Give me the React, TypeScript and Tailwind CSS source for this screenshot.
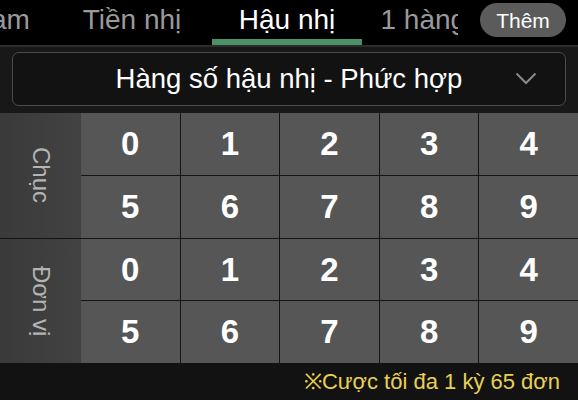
import React, { useState } from "react";

const tabs = ["Hậu tam", "Tiền nhị", "Hậu nhị", "1 hàng số"];
const digits = [0, 1, 2, 3, 4, 5, 6, 7, 8, 9];
const groups = ["Chục", "Đơn vị"];

export default function App() {
  const [active, setActive] = useState(2);
  const [picked, setPicked] = useState<Record<string, number[]>>({});

  const toggle = (group: string, d: number) => {
    const cur = picked[group] || [];
    setPicked({
      ...picked,
      [group]: cur.includes(d) ? cur.filter((x) => x !== d) : [...cur, d],
    });
  };

  return (
    <div className="w-[578px] h-[400px] flex flex-col bg-black overflow-hidden font-['Liberation_Sans',Arial,sans-serif]">
      {/* tab bar */}
      <div className="h-[47px] shrink-0 flex bg-black border-b-2 border-[#2c2c2c]">
        <div className="flex-1 overflow-hidden">
          <div className="flex gap-[5px] ml-[-98px] h-full">
            {tabs.map((t, i) => (
              <div
                key={t}
                onClick={() => setActive(i)}
                className="w-[150px] shrink-0 flex flex-col items-center cursor-pointer"
              >
                <div
                  className={
                    "h-[39px] flex items-center text-[28px] whitespace-nowrap " +
                    (active === i ? "text-white" : "text-[#9a9a9a]")
                  }
                >
                  {t}
                </div>
                {active === i && <div className="w-full h-[6px] bg-[#4a9168]" />}
              </div>
            ))}
          </div>
        </div>
        <div className="w-[120px] shrink-0 flex items-start pt-[3px] pl-[22px]">
          <button className="h-[34px] w-[86px] rounded-full bg-[#5b5b5b] text-white text-[21px] leading-none">
            Thêm
          </button>
        </div>
      </div>

      {/* dropdown */}
      <div className="h-[66px] shrink-0 bg-[#181818] px-[12px] pt-[5px]">
        <div className="h-[54px] rounded-[7px] border border-[#4c4c4c] bg-[#121212] flex items-center relative">
          <div className="flex-1 text-center text-white text-[27.5px]">
            Hàng số hậu nhị - Phức hợp
          </div>
          <svg
            className="absolute right-[28px] top-[19px]"
            width="22"
            height="13"
            viewBox="0 0 22 13"
            fill="none"
          >
            <path d="M1.5 1.5 L11 11 L20.5 1.5" stroke="#8a8a8a" strokeWidth="2" />
          </svg>
        </div>
      </div>

      {/* picker */}
      <div className="flex flex-col gap-px bg-[#141414] h-[250px] shrink-0">
        {groups.map((g) => (
          <div key={g} className="flex flex-1">
            <div className="w-[81px] shrink-0 bg-gradient-to-r from-[#3a3a3a] to-[#424242] flex items-center justify-center">
              <span className="[writing-mode:vertical-rl] text-[#b4b4b4] text-[24px]">
                {g}
              </span>
            </div>
            <div className="flex-1 grid grid-cols-5 grid-rows-2 gap-px">
              {digits.map((d) => {
                const on = (picked[g] || []).includes(d);
                return (
                  <div
                    key={d}
                    onClick={() => toggle(g, d)}
                    className={
                      "flex items-center justify-center text-white font-bold text-[33px] cursor-pointer " +
                      (on ? "bg-[#4a9168]" : "bg-[#565656]")
                    }
                  >
                    {d}
                  </div>
                );
              })}
            </div>
          </div>
        ))}
      </div>

      {/* footer */}
      <div className="flex-1 bg-[#121212] flex items-center justify-end pr-[18px]">
        <span className="text-[#e8d152] text-[22px]">※Cược tối đa 1 kỳ 65 đơn</span>
      </div>
    </div>
  );
}
